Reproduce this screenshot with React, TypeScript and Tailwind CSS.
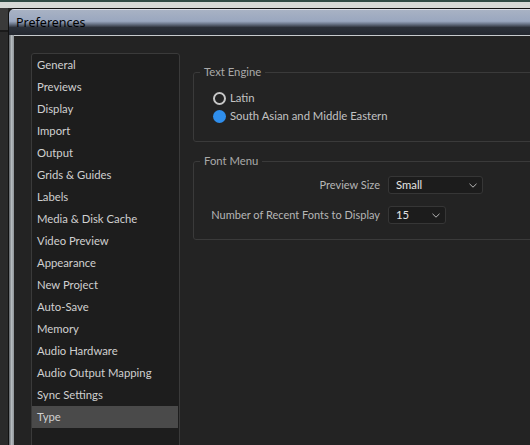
const categories = [
  "General",
  "Previews",
  "Display",
  "Import",
  "Output",
  "Grids & Guides",
  "Labels",
  "Media & Disk Cache",
  "Video Preview",
  "Appearance",
  "New Project",
  "Auto-Save",
  "Memory",
  "Audio Hardware",
  "Audio Output Mapping",
  "Sync Settings",
  "Type",
];

function Chevron() {
  return (
    <svg width="8" height="5" viewBox="0 0 8 5" className="shrink-0">
      <path d="M0.5 0.8 L4 4.2 L7.5 0.8" fill="none" stroke="#b8b8b8" strokeWidth="1" />
    </svg>
  );
}

function Dropdown({ value, width }: { value: string; width: string }) {
  return (
    <div
      className={`${width} h-[18px] flex items-center justify-between pl-[7px] pr-[5px] bg-[#1c1c1c] border border-[#363636] rounded-[3px] text-[#e4e4e4]`}
    >
      <span>{value}</span>
      <Chevron />
    </div>
  );
}

function Radio({ checked, label }: { checked?: boolean; label: string }) {
  return (
    <div className="h-[18px] flex items-center gap-[4px]">
      {checked ? (
        <span className="w-[13px] h-[13px] rounded-full bg-[#2f8eec]" />
      ) : (
        <span className="w-[13px] h-[13px] rounded-full border-2 border-[#c6c6c6]" />
      )}
      <span className="text-[#c2c2c2]">{label}</span>
    </div>
  );
}

export default function App() {
  return (
    <div
      className="w-[530px] h-[445px] overflow-hidden flex flex-col bg-[#262626] text-[11.3px] leading-[14px]"
      style={{ fontFamily: "Lato, 'Noto Sans', sans-serif" }}
    >
      {/* app behind the dialog */}
      <div className="h-[8px] shrink-0 border-t-2 border-[#2f4a44] bg-[#d6d9d6]" />

      <div className="flex-1 flex min-h-0">
        <div className="w-[8px] shrink-0 flex flex-col bg-[#2a2a2a]">
          <div className="h-[22px] bg-[#3a3a3a]" />
          <div className="h-[2px] bg-[#1a1a1a]" />
        </div>

        {/* dialog window */}
        <div className="flex-1 flex flex-col rounded-tl-[6px] border-l border-t border-[#111] overflow-hidden">
          <div className="h-[26px] shrink-0 flex items-center pl-[7px] border-t border-[#d8dde6] bg-[linear-gradient(to_bottom,#a8b2c4_0%,#9aa7bf_45%,#6f7a8e_55%,#2b3039_70%,#23272f_100%)]">
            <span className="text-[12.5px] text-black" style={{ fontFamily: "'Noto Sans', sans-serif" }}>
              Preferences
            </span>
          </div>

          <div className="flex-1 flex min-h-0">
            <div className="w-[5px] shrink-0 bg-[linear-gradient(to_right,#5c6064,#b4babe_50%,#8e9398)]" />

            <div className="flex-1 flex gap-[13px] pt-[17px] pl-[17px] border-t border-[#c6cacd] bg-[#232323] min-w-0">
              {/* category list */}
              <div className="w-[149px] h-[400px] shrink-0 border border-[#3a3a3a] rounded-[3px] bg-[#1d1d1d]">
                {categories.map((c) => (
                  <div
                    key={c}
                    className={`h-[22px] flex items-center pl-[5px] text-[#d0d0d0] ${
                      c === "Type" ? "bg-[#4a4a4a] mr-[1px]" : ""
                    }`}
                  >
                    {c}
                  </div>
                ))}
              </div>

              {/* settings */}
              <div className="w-[360px] shrink-0 flex flex-col gap-[12px] pt-[12px]">
                <fieldset className="border border-[#3a3a3a] rounded-[3px]">
                  <legend className="ml-[6px] px-[4px] text-[#a9a9a9]">Text Engine</legend>
                  <div className="pt-[10px] pb-[16px] pl-[19px]">
                    <Radio label="Latin" />
                    <Radio checked label="South Asian and Middle Eastern" />
                  </div>
                </fieldset>

                <fieldset className="border border-[#3a3a3a] rounded-[3px]">
                  <legend className="ml-[6px] px-[4px] text-[#a9a9a9]">Font Menu</legend>
                  <div className="pt-[8px] pb-[15px] pl-[15px] grid grid-cols-[171px_auto] gap-x-[8px] gap-y-[12px] items-center justify-start">
                    <span className="text-right text-[11px] text-[#b6b6b6]">Preview Size</span>
                    <Dropdown value="Small" width="w-[95px]" />
                    <span className="text-right text-[11px] text-[#b6b6b6] whitespace-nowrap">
                      Number of Recent Fonts to Display
                    </span>
                    <Dropdown value="15" width="w-[58px]" />
                  </div>
                </fieldset>
              </div>
            </div>
          </div>
        </div>
      </div>
    </div>
  );
}
